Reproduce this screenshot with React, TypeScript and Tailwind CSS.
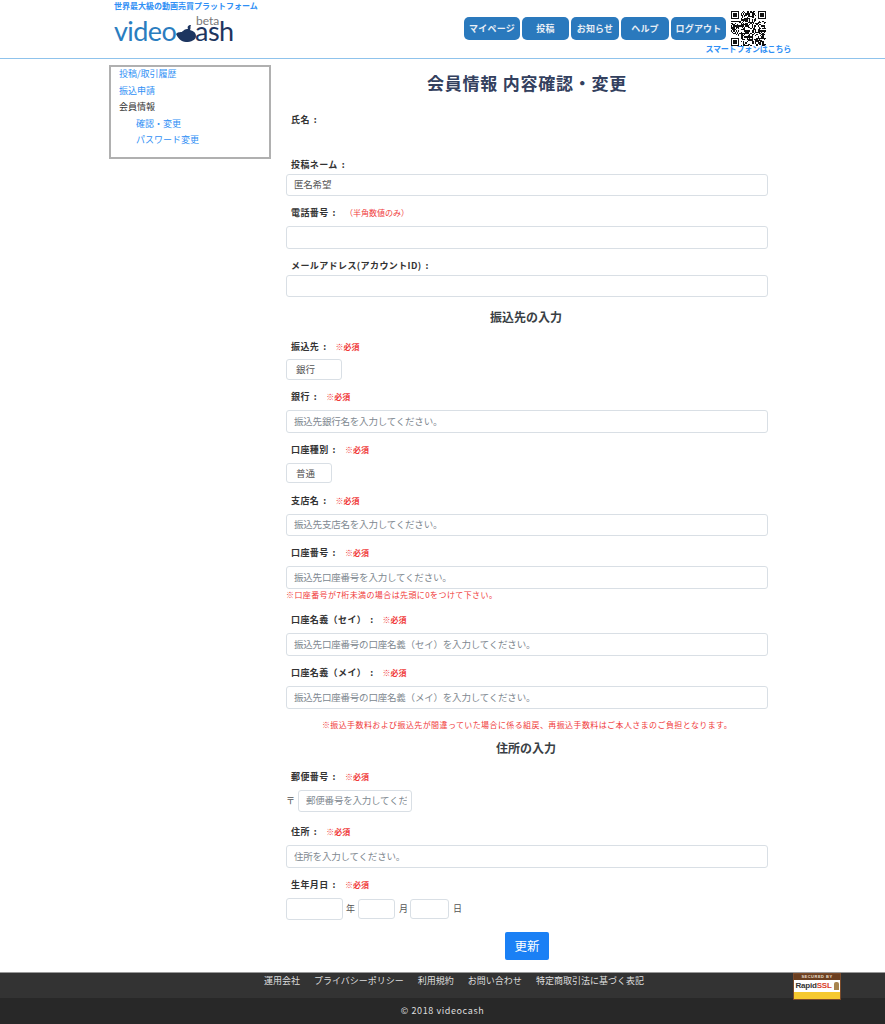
const font = { fontFamily: '"Noto Sans CJK JP", "Liberation Sans", sans-serif' };

const navItems = [
  { label: "マイページ", w: "w-[56px]" },
  { label: "投稿", w: "w-[47px]" },
  { label: "お知らせ", w: "w-[48px]" },
  { label: "ヘルプ", w: "w-[48px]" },
  { label: "ログアウト", w: "w-[55px]" },
];

// fake qr pattern, seeded so that it stays the same between runs
const qrCells = () => {
  const size = 29;
  const cells: [number, number][] = [];
  let seed = 17;
  const inFinder = (x: number, y: number) =>
    (x < 8 && y < 8) || (x > 20 && y < 8) || (x < 8 && y > 20);
  for (let y = 0; y < size; y++) {
    for (let x = 0; x < size; x++) {
      seed = (seed * 1103515245 + 12345) & 0x7fffffff;
      if (!inFinder(x, y) && (seed >> 16) % 100 < 52) cells.push([x, y]);
    }
  }
  return cells;
};

const Finder = ({ x, y }: { x: number; y: number }) => (
  <g>
    <rect x={x} y={y} width="7" height="7" fill="#111" />
    <rect x={x + 1} y={y + 1} width="5" height="5" fill="#fff" />
    <rect x={x + 2} y={y + 2} width="3" height="3" fill="#111" />
  </g>
);

const Qr = () => (
  <svg viewBox="0 0 29 29" className="w-[35px] h-[35px] shrink-0" shapeRendering="crispEdges">
    {qrCells().map(([x, y]) => (
      <rect key={`${x}-${y}`} x={x} y={y} width="1" height="1" fill="#111" />
    ))}
    <Finder x={0} y={0} />
    <Finder x={22} y={0} />
    <Finder x={0} y={22} />
  </svg>
);

const Logo = () => (
  <div className="relative h-[32px] w-[122px] mt-[4px]">
    <div
      className="absolute left-0 top-[1px] flex items-baseline text-[27px] leading-[30px] tracking-[-0.6px]"
      style={{ fontFamily: "Lato, sans-serif" }}
    >
      <span className="text-[#2a7dbf]">video</span>
      <svg viewBox="0 0 20 17" className="w-[20px] h-[17px] self-end mb-[4px]">
        <path d="M0 9 C3 6 5 8 7 6 C9 4 11 4 12 4 C11 2 12 0 15 0 C14 2 15 3 14 5 C18 6 20 8 20 11 C20 15 15 17 10 17 C5 17 2 13 0 9 Z" fill="#1d3560" />
      </svg>
      <span className="text-[#1d3560] -ml-[1px]">ash</span>
    </div>
    <span
      className="absolute left-[82px] -top-[1px] text-[12px] leading-[14px] text-[#777]"
      style={{ fontFamily: "Lato, sans-serif" }}
    >
      beta
    </span>
  </div>
);

const Header = () => (
  <header className="h-[59px] border-b border-[#8fc3ec] flex bg-white">
    <div className="ml-[114px] w-[350px] pt-[1px]">
      <p className="text-[8px] leading-[10px] font-bold text-[#2f8ff5]">世界最大級の動画売買プラットフォーム</p>
      <Logo />
    </div>
    <div className="w-[327px] pt-[11px] flex flex-col">
      <div className="flex">
        <nav className="flex gap-[2px] pt-[6px] h-[29px]">
          {navItems.map((n) => (
            <a
              key={n.label}
              className={`${n.w} h-[23px] rounded-[5px] bg-[#2a79bd] text-[#e8eef5] text-[9px] font-bold tracking-[0.2px] flex items-center justify-center`}
            >
              {n.label}
            </a>
          ))}
        </nav>
        <div className="ml-[5px]">
          <Qr />
        </div>
      </div>
      <p className="text-right text-[8px] leading-[10px] font-bold tracking-[-0.2px] text-[#2f8ff5] -mt-[2px]">スマートフォンはこちら</p>
    </div>
  </header>
);

const Sidebar = () => (
  <aside className="ml-[109px] mt-[6px] w-[162px] h-[94px] border-2 border-[#b0b0b0] pl-[8px] text-[9px] leading-[16.5px] shrink-0">
    <a className="block -mt-[1px] text-[#2f8ff5]">投稿/取引履歴</a>
    <a className="block text-[#2f8ff5]">振込申請</a>
    <p className="text-[#333]">会員情報</p>
    <a className="block pl-[17px] text-[#2f8ff5]">確認・変更</a>
    <a className="block pl-[17px] text-[#2f8ff5]">パスワード変更</a>
  </aside>
);

const Label = ({ text, mt, note, required }: { text: string; mt: string; note?: string; required?: boolean }) => (
  <div className={`${mt} h-[14px] pl-[5px] flex items-center text-[9px] tracking-[0.4px]`}>
    <span className="font-bold text-[#333]">{text}</span>
    <span className="font-bold text-[#333] ml-[4px] mr-[9px]">:</span>
    {required && <span className="text-[8px] font-bold tracking-normal text-[#f03a3a]">※必須</span>}
    {note && <span className="text-[8px] tracking-normal text-[#f03a3a]">{note}</span>}
  </div>
);

const Input = ({ mt, h = "h-[23px]", w = "w-full", placeholder, value }: { mt: string; h?: string; w?: string; placeholder?: string; value?: string }) => (
  <input
    readOnly
    className={`${mt} ${h} ${w} block border border-[#d9dfe5] rounded-[3px] pl-[7px] pr-[4px] pb-[2px] text-[9.5px] tracking-[-0.2px] text-[#555] placeholder:text-[#808890] bg-white outline-none`}
    style={font}
    placeholder={placeholder}
    value={value ?? ""}
  />
);

const Select = ({ mt, h, w, value }: { mt: string; h: string; w: string; value: string }) => (
  <div className={`${mt} ${h} ${w} border border-[#d9dfe5] rounded-[3px] pl-[9px] flex items-center text-[9.5px] text-[#555]`}>
    {value}
  </div>
);

const SubHeading = ({ text, mt }: { text: string; mt: string }) => (
  <h2 className={`${mt} h-[20px] leading-[20px] pr-[2px] text-center text-[12px] font-bold text-[#3a3f45]`}>{text}</h2>
);

const Form = () => (
  <main className="ml-[15px] w-[482px]">
    <h1 className="mt-[9px] h-[30px] leading-[30px] text-center text-[17px] font-bold tracking-[0.75px] text-[#33405e]">会員情報 内容確認・変更</h1>

    <Label text="氏名" mt="mt-[15px]" />
    <Label text="投稿ネーム" mt="mt-[31px]" />
    <Input mt="mt-[2px]" h="h-[22px]" value="匿名希望" />
    <Label text="電話番号" mt="mt-[10px]" note="（半角数値のみ）" />
    <Input mt="mt-[6px]" />
    <Label text="メールアドレス(アカウントID)" mt="mt-[10px]" />
    <Input mt="mt-[2px]" h="h-[22px]" />

    <SubHeading text="振込先の入力" mt="mt-[10px]" />
    <Label text="振込先" mt="mt-[13px]" required />
    <Select mt="mt-[5px]" h="h-[21px]" w="w-[56px]" value="銀行" />
    <Label text="銀行" mt="mt-[10px]" required />
    <Input mt="mt-[6px]" placeholder="振込先銀行名を入力してください。" />
    <Label text="口座種別" mt="mt-[10px]" required />
    <Select mt="mt-[6px]" h="h-[20px]" w="w-[46px]" value="普通" />
    <Label text="支店名" mt="mt-[11px]" required />
    <Input mt="mt-[6px]" h="h-[22px]" placeholder="振込先支店名を入力してください。" />
    <Label text="口座番号" mt="mt-[10px]" required />
    <Input mt="mt-[6px]" placeholder="振込先口座番号を入力してください。" />
    <p className="mt-[1px] h-[10px] leading-[10px] text-[8px] tracking-[0.4px] text-[#f03a3a]">※口座番号が7桁未満の場合は先頭に0をつけて下さい。</p>
    <Label text="口座名義（セイ）" mt="mt-[13px]" required />
    <Input mt="mt-[6px]" placeholder="振込先口座番号の口座名義（セイ）を入力してください。" />
    <Label text="口座名義（メイ）" mt="mt-[10px]" required />
    <Input mt="mt-[6px]" placeholder="振込先口座番号の口座名義（メイ）を入力してください。" />
    <p className="mt-[10px] h-[12px] leading-[12px] text-center text-[8px] tracking-[0.4px] text-[#f03a3a]">※振込手数料および振込先が間違っていた場合に係る組戻、再振込手数料はご本人さまのご負担となります。</p>

    <SubHeading text="住所の入力" mt="mt-[7px]" />
    <Label text="郵便番号" mt="mt-[12px]" required />
    <div className="mt-[6px] flex items-center h-[22px] text-[9px] text-[#555]">
      <span className="w-[12px]">〒</span>
      <Input mt="mt-0" h="h-[22px]" w="w-[114px]" placeholder="郵便番号を入力してください。" />
    </div>
    <Label text="住所" mt="mt-[13px]" required />
    <Input mt="mt-[6px]" placeholder="住所を入力してください。" />
    <Label text="生年月日" mt="mt-[10px]" required />
    <div className="mt-[6px] flex items-center h-[22px] text-[9px] text-[#555]">
      <Input mt="mt-0" h="h-[22px]" w="w-[57px]" />
      <span className="ml-[3px] w-[12px]">年</span>
      <Input mt="mt-0" h="h-[20px]" w="w-[37px]" />
      <span className="ml-[4px] w-[11px]">月</span>
      <Input mt="mt-0" h="h-[20px]" w="w-[39px]" />
      <span className="ml-[4px]">日</span>
    </div>
    <div className="mt-[12px] flex justify-center">
      <button className="w-[44px] h-[28px] rounded-[2px] bg-[#1a80f5] text-white text-[12.5px]">更新</button>
    </div>
  </main>
);

const SslBadge = () => (
  <div className="w-[48px] h-[27px] border border-[#7a4a2a] flex flex-col shrink-0 bg-white" style={{ fontFamily: '"Liberation Sans", sans-serif' }}>
    <div className="h-[6px] bg-[#6b3f20] text-[#eadfce] text-[4px] leading-[6px] font-bold tracking-[0.5px] text-center">SECURED BY</div>
    <div className="h-[12px] flex items-center justify-center gap-[2px] text-[8px] font-bold tracking-[-0.2px]">
      <span className="text-[#333]">Rapid<span className="text-[#d9432b]">SSL</span></span>
      <span className="w-[5px] h-[8px] bg-[#a8854f] rounded-t-[2px]" />
    </div>
    <div className="flex-1 bg-[#f6c92f]" />
  </div>
);

const Footer = () => (
  <footer className="mt-[12px] text-[9px] text-[#ddd]">
    <div className="h-[26px] bg-[#333333] border-t border-[#999] flex pl-[264px] pr-[44px]">
      <div className="flex gap-[14px] pt-[1px] leading-[14px]">
        <a>運用会社</a>
        <a>プライバシーポリシー</a>
        <a>利用規約</a>
        <a>お問い合わせ</a>
        <a>特定商取引法に基づく表記</a>
      </div>
      <div className="ml-auto">
        <SslBadge />
      </div>
    </div>
    <div className="h-[26px] bg-[#282828] flex items-center justify-center tracking-[0.6px]">© 2018 videocash</div>
  </footer>
);

const App = () => {
  return (
    <div className="w-[885px] bg-white" style={font}>
      <Header />
      <div className="flex">
        <Sidebar />
        <Form />
      </div>
      <Footer />
    </div>
  );
};

export default App;
